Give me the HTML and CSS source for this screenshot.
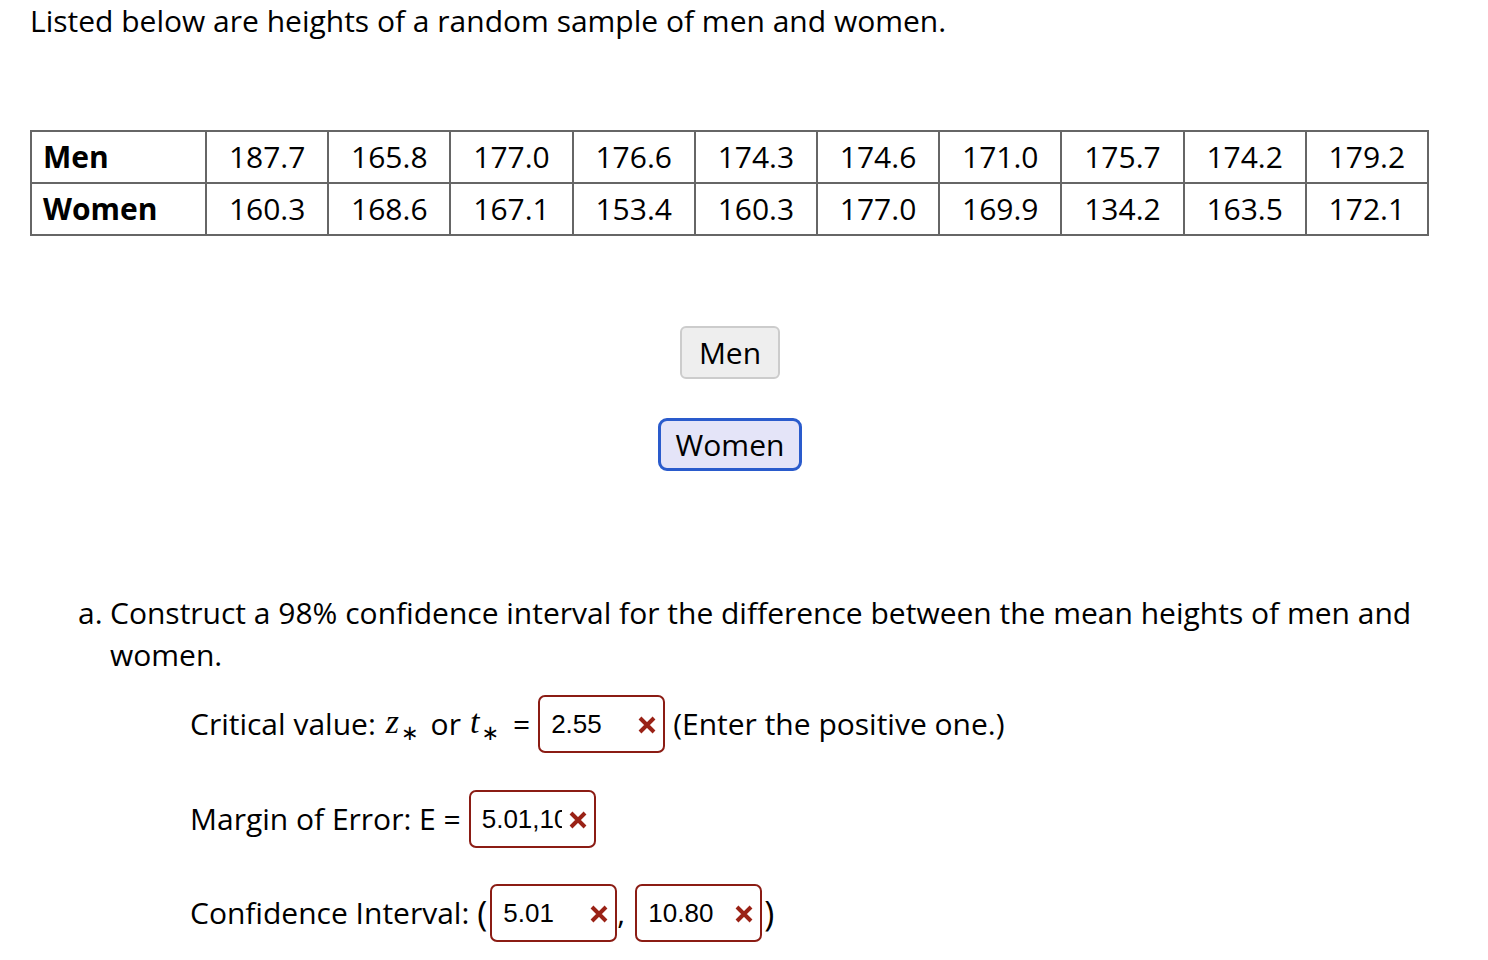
FILE: index.html
```html
<!DOCTYPE html>
<html lang="en">
<head>
<meta charset="utf-8">
<title>Heights</title>
<link rel="stylesheet" href="styles.css">
</head>
<body>
<div class="page">
  <p class="intro">Listed below are heights of a random sample of men and women.</p>
  <table class="data">
    <tr><th>Men</th><td>187.7</td><td>165.8</td><td>177.0</td><td>176.6</td><td>174.3</td><td>174.6</td><td>171.0</td><td>175.7</td><td>174.2</td><td>179.2</td></tr>
    <tr><th>Women</th><td>160.3</td><td>168.6</td><td>167.1</td><td>153.4</td><td>160.3</td><td>177.0</td><td>169.9</td><td>134.2</td><td>163.5</td><td>172.1</td></tr>
  </table>
  <div class="buttons">
    <button class="btn">Men</button>
    <button class="btn btn-active">Women</button>
  </div>
  <div class="part">
    <div class="part-head"><span class="part-letter">a.</span><span class="part-text">Construct a 98% confidence interval for the difference between the mean heights of men and women.</span></div>
    <div class="answers">
      <div class="row row-crit">
        <span>Critical value:</span>
        <span class="math"><i>z</i><span class="star">∗</span></span>
        <span class="or">or</span>
        <span class="math math-t"><i>t</i><span class="star">∗</span></span>
        <span class="eq">=</span>
        <span class="field"><span class="val">2.55</span><svg class="x" viewBox="0 0 20 20"><path d="M3 3L17 17M17 3L3 17"/></svg></span>
        <span class="note">(Enter the positive one.)</span>
      </div>
      <div class="row row-moe">
        <span>Margin of Error: E =</span>
        <span class="field field-clip"><span class="val">5.01,10.80</span><svg class="x" viewBox="0 0 20 20"><path d="M3 3L17 17M17 3L3 17"/></svg></span>
      </div>
      <div class="row row-ci">
        <span>Confidence Interval:</span>
        <span class="paren">(</span>
        <span class="field"><span class="val">5.01</span><svg class="x" viewBox="0 0 20 20"><path d="M3 3L17 17M17 3L3 17"/></svg></span>
        <span class="comma">,</span>
        <span class="field"><span class="val">10.80</span><svg class="x" viewBox="0 0 20 20"><path d="M3 3L17 17M17 3L3 17"/></svg></span>
        <span class="paren paren-r">)</span>
      </div>
    </div>
  </div>
</div>
</body>
</html>
```
FILE: styles.css
```css
html, body {
  margin: 0;
  padding: 0;
  background: #fff;
}
body {
  font-family: "Open Sans", "Noto Sans", sans-serif;
  font-size: 30px;
  line-height: 42px;
  color: #000;
}
.page {
  width: 1400px;
  margin-left: 30px;
}
.intro {
  margin: 0;
}
.data {
  margin-top: 88px;
  border-collapse: collapse;
  width: 1399px;
}
.data th, .data td {
  border: 2px solid #666;
  height: 50px;
  padding: 0;
  line-height: 40px;
}
.data th {
  text-align: left;
  font-weight: 700;
  width: 164px;
  padding-left: 11px;
}
.data td {
  text-align: center;
  width: 122px;
}
.buttons {
  margin-top: 90px;
  display: flex;
  flex-direction: column;
  align-items: center;
  gap: 39px;
}
.btn {
  font-family: inherit;
  font-size: 30px;
  line-height: 41px;
  color: #000;
  background: #eeeeee;
  border: 2px solid #cccccc;
  border-radius: 6px;
  padding: 4px 17px 4px;
  height: 53px;
  margin: 0;
}
.btn-active {
  background: #e4e4f8;
  border: 3px solid #2a5bcc;
  border-radius: 9px;
  padding: 3px 15px;
}
.part {
  margin-top: 121px;
  padding-left: 48px;
}
.part-head {
  display: flex;
}
.part-letter {
  width: 32px;
  flex: none;
}
.part-text {
  flex: 1;
}
.answers {
  padding-left: 112px;
  margin-top: 19px;
}
.row {
  display: flex;
  align-items: center;
  height: 58px;
  white-space: pre;
}
.row-moe {
  margin-top: 37px;
}
.row-ci {
  margin-top: 36px;
}
.math {
  font-family: "Liberation Serif", "DejaVu Serif", serif;
  font-size: 34px;
  line-height: 42px;
  margin-left: 10px;
}
.math i {
  font-style: italic;
}
.star {
  position: relative;
  top: 7px;
  font-family: "DejaVu Sans", sans-serif;
  font-size: 21px;
  margin-left: 2px;
}
.or {
  margin-left: 12px;
}
.math-t {
  margin-left: 9px;
}
.eq {
  margin-left: 14px;
  margin-right: 8px;
}
.field {
  position: relative;
  display: inline-flex;
  align-items: center;
  box-sizing: border-box;
  width: 127px;
  height: 58px;
  flex: none;
  border: 2px solid #8b1c14;
  border-radius: 7px;
  padding-left: 11px;
  font-family: "Liberation Sans", Arial, sans-serif;
  font-size: 26px;
  line-height: 30px;
}
.val {
  display: block;
  overflow: hidden;
  width: 96px;
}
.field-clip .val {
  width: 80px;
}
.row-moe .field {
  margin-left: 8px;
}
.x {
  position: absolute;
  right: 6px;
  top: 18px;
  width: 20px;
  height: 20px;
}
.x path {
  stroke: #9a2216;
  stroke-width: 4;
  fill: none;
}
.note {
  margin-left: 8px;
}
.paren {
  font-size: 34px;
  margin-left: 8px;
  margin-right: 3px;
}
.paren-r {
  margin-left: 2px;
}
.comma {
  width: 18px;
}
```
